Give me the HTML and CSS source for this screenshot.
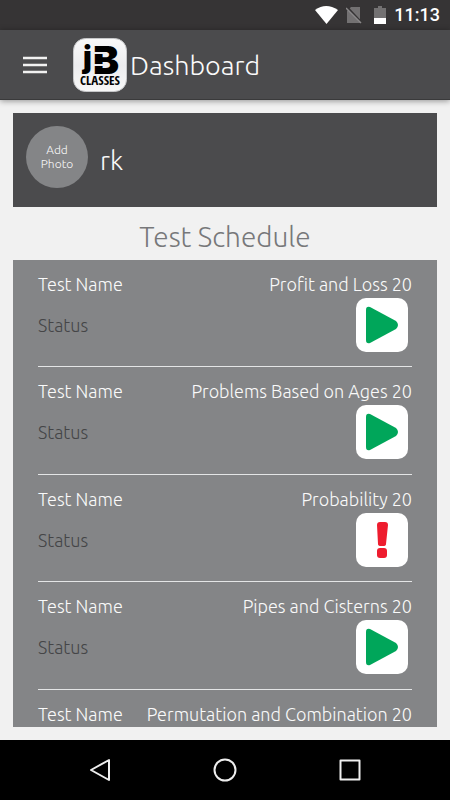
FILE: index.html
```html
<!DOCTYPE html>
<html lang="en">
<head>
<meta charset="utf-8">
<meta name="viewport" content="width=device-width, initial-scale=1">
<title>Dashboard</title>
<link rel="stylesheet" href="styles.css">
</head>
<body>
<svg class="defs" aria-hidden="true">
  <symbol id="play" viewBox="0 0 52 54"><path d="M10 12v30q0 4 4 3l26-14q4-4 0-8L14 9q-4-1-4 3z" fill="#00a65a"/></symbol>
  <symbol id="alert" viewBox="0 0 52 54"><path d="M24 9h5q3 0 3 3l-2 19q0 2-3 2h-2q-3 0-3-2l-1-19q0-3 3-3z" fill="#ee1c2e"/><rect x="21" y="35" width="10" height="10" rx="3" fill="#ee1c2e"/></symbol>
</svg>
<div class="statusbar">
  <svg width="23" height="18" viewBox="0 0 23 18" aria-hidden="true"><path d="M0 4Q11 -4 23 4L11.500 18z" fill="#fff"/></svg>
  <svg width="16" height="18" viewBox="0 0 16 18" aria-hidden="true"><path d="M5 1h9v16H1V5z" fill="#737172"/><path d="M1 1l15 16" stroke="#363435" stroke-width="2"/><path d="M0 2l15 15" stroke="#8a8889" stroke-width="1.500"/></svg>
  <svg width="12" height="18" viewBox="0 0 12 18" aria-hidden="true"><path d="M4 0h4v2h4v16H0V2h4z" fill="#737172"/><path d="M0 12h12v6H0z" fill="#fff"/></svg>
  <span class="clock">11:13</span>
</div>
<header class="appbar">
  <button class="menu" aria-label="Menu"><svg width="24" height="18" viewBox="0 0 24 18"><path d="M0 2h24M0 9h24M0 16h24" stroke="#f1f1f1" stroke-width="2.500"/></svg></button>
  <svg class="logo" width="54" height="54" viewBox="0 0 54 54" role="img" aria-label="JB Classes">
    <defs><linearGradient id="tile" x2="0" y2="1"><stop stop-color="#fafafa"/><stop offset=".5" stop-color="#ececee"/><stop offset="1" stop-color="#f8f8f8"/></linearGradient></defs>
    <rect x=".5" y=".5" width="53" height="53" rx="12" fill="url(#tile)" stroke="#c6c7c9"/>
    <text class="logo-j" x="10" y="30">j</text>
    <text class="logo-b" x="20" y="36">B</text>
    <path d="M20 15h13M20 27h13" stroke="#ececee" stroke-width="2"/>
    <text class="logo-name" x="27" y="47" text-anchor="middle">CLASSES</text>
  </svg>
  <h1>Dashboard</h1>
</header>
<main>
  <section class="profile">
    <button class="photo">Add<br>Photo</button>
    <span class="user">rk</span>
  </section>
  <h2>Test Schedule</h2>
  <ul class="tests">
    <li><div class="line"><span>Test Name</span><span>Profit and Loss 20</span></div><div class="line status"><span>Status</span><button aria-label="Start test"><svg><use href="#play"/></svg></button></div></li>
    <li><div class="line"><span>Test Name</span><span>Problems Based on Ages 20</span></div><div class="line status"><span>Status</span><button aria-label="Start test"><svg><use href="#play"/></svg></button></div></li>
    <li><div class="line"><span>Test Name</span><span>Probability 20</span></div><div class="line status"><span>Status</span><button aria-label="Test alert"><svg><use href="#alert"/></svg></button></div></li>
    <li><div class="line"><span>Test Name</span><span>Pipes and Cisterns 20</span></div><div class="line status"><span>Status</span><button aria-label="Start test"><svg><use href="#play"/></svg></button></div></li>
    <li><div class="line"><span>Test Name</span><span>Permutation and Combination 20</span></div></li>
  </ul>
</main>
<nav class="system">
  <button aria-label="Back"><svg width="24" height="24" viewBox="0 0 24 24"><path d="M21 2v20L3 12z"/></svg></button>
  <button aria-label="Home"><svg width="24" height="24" viewBox="0 0 24 24"><circle cx="12" cy="12" r="10.500"/></svg></button>
  <button aria-label="Recent apps"><svg width="24" height="24" viewBox="0 0 24 24"><path d="M2.500 2.500h19v19h-19z"/></svg></button>
</nav>
</body>
</html>
```

FILE: styles.css
```css
* { box-sizing: border-box; }
body {
  margin: 0;
  height: 100vh;
  display: flex;
  flex-direction: column;
  background: #f1f1f1;
  color: #fafafa;
  font-family: Ubuntu, "Open Sans", "Noto Sans", sans-serif;
  font-weight: 300;
}
button {
  padding: 0;
  border: 0;
  background: none;
  color: inherit;
  font: inherit;
}
svg { display: block; }
h1, h2 { margin: 0; font-weight: 300; }
.defs { position: absolute; width: 0; height: 0; }

.statusbar {
  flex: none;
  height: 30px;
  padding: 0 10px;
  display: flex;
  align-items: center;
  justify-content: flex-end;
  gap: 8px;
  background: #363435;
}
.statusbar svg:nth-child(3) { margin-left: 4px; }
.clock {
  color: #fff;
  font: 500 18px/32px Roboto, sans-serif;
}

.appbar {
  flex: none;
  height: 70px;
  padding: 0 23px;
  display: flex;
  align-items: center;
  background: #4b4b4d;
  border-bottom: 1px solid #3a3a3b;
  box-shadow: 0 1px 6px rgba(0, 0, 0, .4);
}
.logo { margin-left: 26px; }
.logo-j { font: 900 30px Inter, sans-serif; }
.logo-b { font: 900 39px Inter, sans-serif; }
.logo-name { font: 700 13px "Open Sans Condensed", "Liberation Sans Narrow", "Roboto Condensed", sans-serif; }
.appbar h1 { margin-left: 3px; font-size: 27px; line-height: 36px; }

main {
  flex: 1;
  min-height: 0;
  padding: 13px;
  display: flex;
  flex-direction: column;
}
.profile {
  flex: none;
  height: 94px;
  padding: 13px;
  display: flex;
  background: #4b4b4d;
}
.photo {
  width: 62px;
  height: 62px;
  border-radius: 50%;
  background: #848587;
  font-size: 12px;
  line-height: 14px;
}
.user { margin: 16px 0 0 12px; font-size: 27px; line-height: 36px; }
h2 {
  flex: none;
  color: #77787a;
  font-size: 28px;
  line-height: 54px;
  padding-top: 3px;
  height: 53px;
  text-align: center;
}
.tests {
  flex: 1;
  min-height: 0;
  margin: 0;
  padding: 0 25px;
  list-style: none;
  overflow: hidden;
  background: #848587;
}
.tests li { height: 107px; padding-top: 11px; border-bottom: 1px solid #e4e5e6; }
.tests li:nth-child(even) { height: 108px; }
.line {
  display: flex;
  align-items: center;
  justify-content: space-between;
  font-size: 18px;
  line-height: 27px;
}
.status { padding-right: 4px; }
.status span { color: #454547; }
.status button {
  width: 52px;
  height: 54px;
  border-radius: 10px;
  background: #fff;
}
.status svg { width: 52px; height: 54px; }

.system {
  flex: none;
  height: 60px;
  padding: 0 38px;
  display: flex;
  align-items: center;
  justify-content: space-between;
  background: #000;
}
.system button { flex: 1; display: flex; justify-content: center; }
.system svg {
  fill: none;
  stroke: #eee;
  stroke-width: 2;
  stroke-linejoin: round;
}
```
